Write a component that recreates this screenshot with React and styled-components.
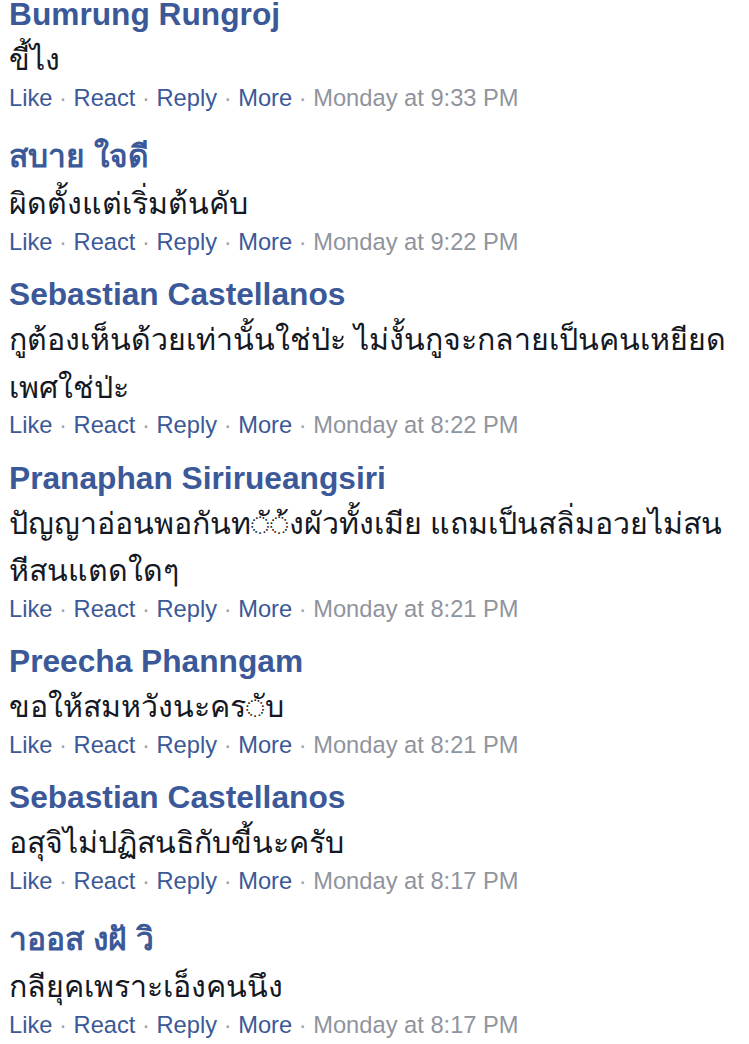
import React from 'react';
import styled, { createGlobalStyle } from 'styled-components';

const GlobalStyle = createGlobalStyle`
  html, body {
    margin: 0;
    padding: 0;
    background: #fff;
  }
  body {
    font-family: "Liberation Sans", Arial, sans-serif;
  }
`;

const List = styled.div`
  display: flex;
  flex-direction: column;
  gap: 24.5px;
  padding: 0 15px 0 9px;
  width: 749px;
  box-sizing: border-box;
`;

const Comment = styled.div`
  display: flex;
  flex-direction: column;
`;

const Name = styled.div`
  color: #3b5998;
  font-weight: 700;
  font-size: 31.7px;
  line-height: 28px;
  padding: ${p => (p.$thai ? '6px 0 2px' : '0')};
  margin-bottom: 8px;
  white-space: nowrap;
`;

const Body = styled.div`
  color: #141823;
  font-size: 30.3px;
  line-height: 47.5px;
`;

const Actions = styled.div`
  font-size: 23.7px;
  line-height: 28px;
  color: #90949c;
  white-space: nowrap;
`;

const Link = styled.span`
  color: #3b5998;
`;

const Dot = styled.span`
  color: #a0a4ab;
`;

const comments = [
  { name: 'Bumrung Rungroj', text: 'ขี้ไง', time: 'Monday at 9:33 PM' },
  { name: 'สบาย ใจดี', thai: true, text: 'ผิดตั้งแต่เริ่มต้นคับ', time: 'Monday at 9:22 PM' },
  {
    name: 'Sebastian Castellanos',
    text: 'กูต้องเห็นด้วยเท่านั้นใช่ป่ะ ไม่งั้นกูจะกลายเป็นคนเหยียดเพศใช่ป่ะ',
    time: 'Monday at 8:22 PM',
  },
  {
    name: 'Pranaphan Sirirueangsiri',
    text: 'ปัญญาอ่อนพอกันท\u25CC\u0E31\u25CC\u0E49งผัวทั้งเมีย แถมเป็นสลิ่มอวยไม่สนหีสนแตดใดๆ',
    time: 'Monday at 8:21 PM',
  },
  { name: 'Preecha Phanngam', text: 'ขอให้สมหวังนะคร\u25CC\u0E31บ', time: 'Monday at 8:21 PM' },
  { name: 'Sebastian Castellanos', text: 'อสุจิไม่ปฏิสนธิกับขี้นะครับ', time: 'Monday at 8:17 PM' },
  { name: 'าออส งฝั วิ', thai: true, text: 'กลียุคเพราะเอ็งคนนึง', time: 'Monday at 8:17 PM' },
];

const ActionLine = ({ time }) => (
  <Actions>
    <Link>Like</Link> <Dot>·</Dot> <Link>React</Link> <Dot>·</Dot> <Link>Reply</Link>{' '}
    <Dot>·</Dot> <Link>More</Link> <Dot>·</Dot> {time}
  </Actions>
);

export default function App() {
  return (
    <>
      <GlobalStyle />
      <List>
        {comments.map((c, i) => (
          <Comment key={i}>
            <Name $thai={c.thai}>{c.name}</Name>
            <Body>{c.text}</Body>
            <ActionLine time={c.time} />
          </Comment>
        ))}
      </List>
    </>
  );
}
